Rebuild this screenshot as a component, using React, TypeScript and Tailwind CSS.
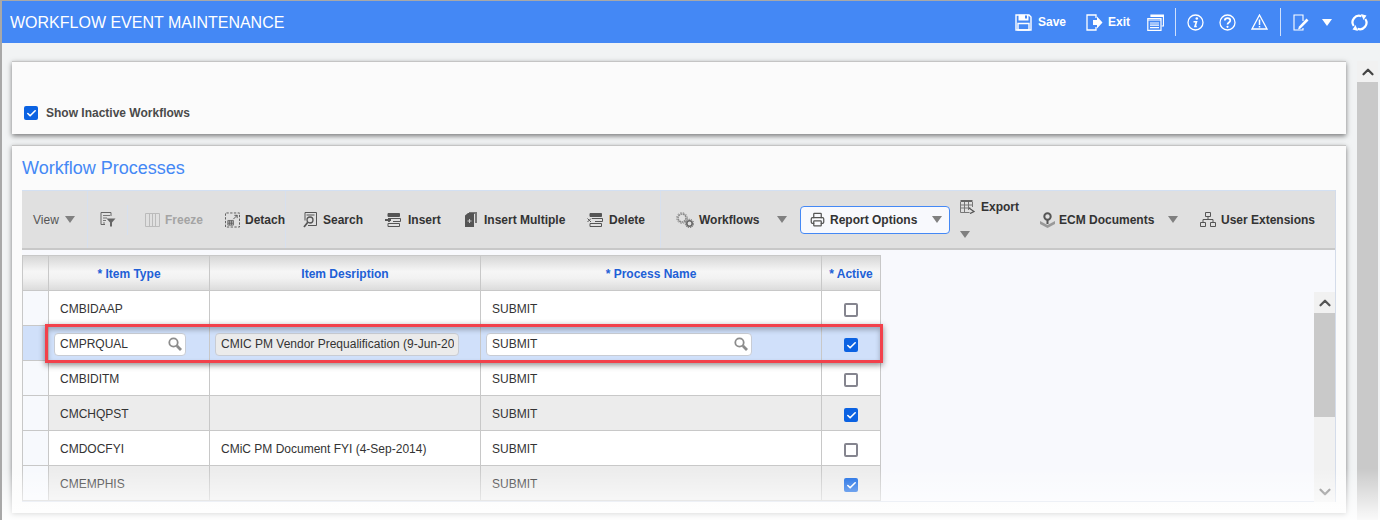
import React from 'react';
import { Check, ChevronUp, ChevronDown, Printer } from 'lucide-react';

const font = "font-['Liberation_Sans',Arial,sans-serif]";

function Caret({ className = '' }: { className?: string }) {
  return (
    <svg width="10" height="7" viewBox="0 0 10 7" className={className}>
      <path d="M0 0h10L5 7z" fill="currentColor" />
    </svg>
  );
}

function Lens() {
  return (
    <svg width="14" height="14" viewBox="0 0 14 14" fill="none" stroke="#8c8c8c">
      <circle cx="5.500" cy="5.500" r="4.200" strokeWidth="1.800" />
      <path d="M8.800 8.800L13 13" strokeWidth="2.800" />
    </svg>
  );
}

function SaveGlyph() {
  return (
    <svg width="17" height="17" viewBox="0 0 17 17" fill="none" stroke="#fff" strokeWidth="1.400">
      <path d="M1 1h13l2 2v13H1z" />
      <path d="M3.500 .8h10v5.700h-10z" fill="#fff" stroke="none" />
      <path d="M10 1.500h2v3h-2z" fill="#4488f5" stroke="none" />
      <path d="M3 9.500h11V16H3z" />
    </svg>
  );
}

function ExitGlyph() {
  return (
    <svg width="17" height="17" viewBox="0 0 17 17" fill="none">
      <path d="M10 4V1H1v15h9v-3" stroke="#fff" strokeWidth="1.300" />
      <path d="M7 6h4V2.500L16.500 8.500 11 14.500V11H7z" fill="#fff" />
    </svg>
  );
}

function PagesGlyph() {
  return (
    <svg width="17" height="17" viewBox="0 0 17 17" fill="none" stroke="#fff" strokeWidth="1.200">
      <path d="M4 3V1h12.500v11h-2" />
      <path d="M4 2h12" strokeWidth="2" />
      <path d="M.8 4.500h13.200V16.300H.8z" fill="#4488f5" />
      <path d="M.8 6h13.200M3 9h9M3 11.200h9M3 13.600h9" />
    </svg>
  );
}

function InfoGlyph() {
  return (
    <svg width="17" height="17" viewBox="0 0 17 17" fill="none">
      <circle cx="8.500" cy="8.500" r="7.500" stroke="#fff" strokeWidth="1.300" />
      <circle cx="9.800" cy="4.500" r="1.300" fill="#fff" />
      <path d="M6.500 7.800h3l-1.500 4.700h1.800" stroke="#fff" strokeWidth="1.600" />
    </svg>
  );
}

function HelpGlyph() {
  return (
    <svg width="17" height="17" viewBox="0 0 17 17" fill="none">
      <circle cx="8.500" cy="8.500" r="7.500" stroke="#fff" strokeWidth="1.300" />
      <path d="M5.800 6.500c0-3.300 5.500-3.300 5.500 0 0 2-2.800 2-2.800 4" stroke="#fff" strokeWidth="1.700" />
      <circle cx="8.500" cy="12.800" r="1.100" fill="#fff" />
    </svg>
  );
}

function WarnGlyph() {
  return (
    <svg width="17" height="16" viewBox="0 0 17 16" fill="none">
      <path d="M8.500 1L16 15H1z" stroke="#fff" strokeWidth="1.300" />
      <path d="M8.500 5.500v5.500M8.500 12v1.500" stroke="#fff" strokeWidth="1.500" />
    </svg>
  );
}

function EditGlyph() {
  return (
    <svg width="16" height="17" viewBox="0 0 16 17" fill="none">
      <path d="M10 14v2H1V1h9v6" stroke="#fff" strokeWidth="1.100" />
      <path d="M5 15.500l1-3 7.500-8 2 2-8 8z" fill="#fff" />
    </svg>
  );
}

function RefreshGlyph() {
  return (
    <svg width="17" height="17" viewBox="0 0 17 17" fill="none">
      <path d="M2.700 12A6.500 6.500 0 0 1 10.500 2.300" stroke="#fff" strokeWidth="2.200" />
      <path d="M14.300 5A6.500 6.500 0 0 1 6.500 14.700" stroke="#fff" strokeWidth="2.200" />
      <path d="M10 0l5.500 1.500-3 4.500zM7 17l-5.500-1.500 3-4.500z" fill="#fff" />
    </svg>
  );
}

function FilterGlyph() {
  return (
    <svg width="16" height="15" viewBox="0 0 16 15" fill="none">
      <path d="M1 .5h10v3.500M1 .5v12h4" stroke="#666" />
      <path d="M3 3.500h7M3 6h4M3 8.500h3M3 11h2" stroke="#777" />
      <path d="M6.500 6.500h9l-3.500 4v4h-2v-4z" fill="#666" />
    </svg>
  );
}

function FreezeGlyph() {
  return (
    <svg width="15" height="14" viewBox="0 0 15 14" fill="none" stroke="#bbb">
      <path d="M.5.500h14v13H.5zM4.500.500v13M7.500.500v13M10.500.500v13" />
    </svg>
  );
}

function DetachGlyph() {
  return (
    <svg width="16" height="16" viewBox="0 0 16 16" fill="none">
      <path d="M.5 15.500V.500h15v15z" stroke="#555" strokeDasharray="2.500 1.500" />
      <path d="M3 8.500h6v5H3zM3 10.200h6M3 11.900h6M5 8.500v5M7 8.500v5" stroke="#555" strokeWidth=".8" />
      <path d="M9 7l4-4M10 3h3v3" stroke="#555" />
    </svg>
  );
}

function FindGlyph() {
  return (
    <svg width="14" height="16" viewBox="0 0 14 16" fill="none" stroke="#555">
      <path d="M2 .5h11.500v13H5" />
      <path d="M2 .5v8M3.500 3h8" />
      <circle cx="7" cy="8" r="3" strokeWidth="1.300" />
      <path d="M4.800 10.200L1 15" strokeWidth="1.800" />
    </svg>
  );
}

function InsertGlyph() {
  return (
    <svg width="16" height="14" viewBox="0 0 16 14" fill="none">
      <path d="M3 .5h11.500v3H3z" fill="#555" stroke="#555" />
      <path d="M3 5.500h12.500v3H8M3 10.500h11.500v3H3z" stroke="#555" />
      <path d="M0 7h6M4 5v4" stroke="#555" strokeWidth="1.800" />
    </svg>
  );
}

function InsertMultipleGlyph() {
  return (
    <svg width="12" height="15" viewBox="0 0 12 15">
      <path d="M4 0h8v11H10V2H4z" fill="#777" />
      <path d="M0 3.500L3 1h6v14H0z" fill="#555" />
      <path d="M2.500 9h4M4.500 7v4" stroke="#ccc" />
    </svg>
  );
}

function DeleteGlyph() {
  return (
    <svg width="16" height="14" viewBox="0 0 16 14" fill="none">
      <path d="M3 .5h11.500v3H3z" fill="#555" stroke="#555" />
      <path d="M5 5.500h10.500v3H8M3 10.500h11.500v3H3z" stroke="#555" />
      <path d="M.5 5.500l3.500 3.500M4 5.500L.5 9" stroke="#555" />
    </svg>
  );
}

function GearsGlyph() {
  return (
    <svg width="18" height="16" viewBox="0 0 18 16" fill="none">
      <circle cx="6" cy="6" r="4" stroke="#888" strokeWidth="1.600" strokeDasharray="1.800 .6" />
      <circle cx="6" cy="6" r="5.300" stroke="#888" strokeWidth="1" strokeDasharray="1.500 1.300" />
      <circle cx="13.500" cy="11.500" r="2.700" stroke="#666" strokeWidth="1.600" />
      <circle cx="13.500" cy="11.500" r="4.200" stroke="#666" strokeWidth="1" strokeDasharray="1.300 1" />
    </svg>
  );
}

function ExportGlyph() {
  return (
    <svg width="15" height="14" viewBox="0 0 15 14" fill="none">
      <path d="M.5 0h12v2H.5z" fill="#666" />
      <path d="M.5 2v10.500h9M12.500 2v5M4.500 2v10M8.500 2v8M.5 5h12M.5 8h10" stroke="#777" />
      <path d="M9 8l5 3.500-4 2" stroke="#555" strokeWidth="1.300" />
    </svg>
  );
}

function EcmGlyph() {
  return (
    <svg width="15" height="16" viewBox="0 0 15 16" fill="none">
      <path d="M0 9l7.500 4L15 9v3l-7.500 4L0 12z" fill="#999" />
      <circle cx="7.500" cy="4.500" r="3.200" stroke="#555" strokeWidth="2" />
      <path d="M7.500 8v4" stroke="#555" strokeWidth="2" />
    </svg>
  );
}

function ExtensionsGlyph() {
  return (
    <svg width="16" height="15" viewBox="0 0 16 15" fill="none" stroke="#555">
      <path d="M5.500.5h5v4h-5zM.5 10.500h5v4h-5zM10.500 10.500h5v4h-5z" />
      <path d="M8 4.500v3M3 10.500v-3h10v3" />
    </svg>
  );
}

function Box({ checked, className = '' }: { checked?: boolean; className?: string }) {
  if (checked) {
    return (
      <span className={`flex h-[14px] w-[14px] items-center justify-center rounded-[2px] bg-[#0b62e2] ${className}`}>
        <Check size={11} strokeWidth={3.5} color="#fff" />
      </span>
    );
  }
  return <span className={`block h-[14px] w-[14px] rounded-[2px] border-2 border-[#85858f] bg-white ${className}`} />;
}

function Tool({ icon, label, width, gap = 'gap-[7px]', muted, className = '' }: { icon: React.ReactNode; label: string; width: string; gap?: string; muted?: boolean; className?: string }) {
  return (
    <div className={`flex shrink-0 items-center ${gap} ${width} ${className}`}>
      {icon}
      <span className={`whitespace-nowrap text-[12px] font-bold ${muted ? 'text-[#a4a4a4]' : 'text-[#333]'}`}>{label}</span>
    </div>
  );
}

function HeaderCell({ children, last }: { children: React.ReactNode; last?: boolean }) {
  return (
    <div className={`flex h-[36px] items-center justify-center border-t border-l border-b border-[#c8c8c8] bg-[linear-gradient(#d6d6d6,#f6f6f6_45%,#f2f2f2_65%,#dcdcdc)] pt-[1px] text-[12px] font-bold text-[#2160d6] ${last ? 'border-r' : ''}`}>
      {children}
    </div>
  );
}

const rows = [
  { type: 'CMBIDAAP', desc: '', active: false, bg: 'bg-white' },
  { type: 'CMBIDITM', desc: '', active: false, bg: 'bg-white' },
  { type: 'CMCHQPST', desc: '', active: true, bg: 'bg-[#ececec]' },
  { type: 'CMDOCFYI', desc: 'CMiC PM Document FYI (4-Sep-2014)', active: false, bg: 'bg-white' },
  { type: 'CMEMPHIS', desc: '', active: true, bg: 'bg-[#ececec]' },
];

const cols = 'grid grid-cols-[26px_161px_271px_341px_60px]';
const cell = 'flex h-[35px] items-center border-l border-b border-[#c8c8c8] pt-[2px] text-[12px] text-[#333]';

function PlainRow({ row }: { row: (typeof rows)[number] }) {
  return (
    <div className={cols}>
      <div className={`${cell} bg-[#f7f9fd]`} />
      <div className={`${cell} ${row.bg} pl-[11px]`}>{row.type}</div>
      <div className={`${cell} ${row.bg} pl-[11px]`}>{row.desc}</div>
      <div className={`${cell} ${row.bg} pl-[11px]`}>SUBMIT</div>
      <div className={`${cell} ${row.bg} justify-center border-r`}>
        <Box checked={row.active} className="mt-[2px]" />
      </div>
    </div>
  );
}

function SelectedRow() {
  const input = 'flex h-[23px] items-center rounded-[4px] border border-[#c8ccd4] pl-[5px] text-[12px] text-[#333]';
  return (
    <div className={`${cols} relative z-10`}>
      <div className={`${cell} bg-[#d0e0fa]`} />
      <div className={`${cell} bg-[#d0e0fa] pl-[5px]`}>
        <div className={`${input} w-[132px] justify-between bg-white pr-[3px]`}>
          CMPRQUAL
          <Lens />
        </div>
      </div>
      <div className={`${cell} bg-[#d0e0fa] pl-[5px]`}>
        <div className={`${input} w-[244px] overflow-hidden whitespace-nowrap bg-[#ebebeb]`}>
          <span className="w-[233px] overflow-hidden">CMIC PM Vendor Prequalification (9-Jun-2014)</span>
        </div>
      </div>
      <div className={`${cell} bg-[#d0e0fa] pl-[5px]`}>
        <div className={`${input} w-[266px] justify-between bg-white pr-[3px]`}>
          SUBMIT
          <Lens />
        </div>
      </div>
      <div className={`${cell} justify-center border-r bg-[#d0e0fa]`}>
        <Box checked className="mt-[2px]" />
      </div>
      <div className="pointer-events-none absolute -top-[2px] left-[23px] h-[39px] w-[838px] border-[3px] border-[#f2414b] shadow-[0_2px_6px_rgba(0,0,0,0.45),inset_0_3px_5px_rgba(0,0,0,0.25)]" />
    </div>
  );
}

export default function App() {
  return (
    <div className={`${font} relative h-[520px] w-[1380px] overflow-hidden border-t border-l-2 border-[#a8a8a8] bg-[#f1f3f4]`}>
      {/* top bar */}
      <div className="flex h-[42px] items-center justify-between bg-[#4488f5] pl-[8px] text-white">
        <span className="pt-[1px] text-[16px]">WORKFLOW EVENT MAINTENANCE</span>
        <div className="flex items-center pr-[12px]">
          <div className="flex w-[71px] items-center gap-[6px] text-[12px] font-bold"><SaveGlyph />Save</div>
          <div className="flex w-[61px] items-center gap-[5px] text-[12px] font-bold"><ExitGlyph />Exit</div>
          <PagesGlyph />
          <div className="mx-[11px] h-[28px] w-px bg-[#cfe0fc]" />
          <InfoGlyph />
          <div className="w-[15px]" />
          <HelpGlyph />
          <div className="w-[15px]" />
          <WarnGlyph />
          <div className="mx-[12px] h-[28px] w-px bg-[#cfe0fc]" />
          <EditGlyph />
          <Caret className="mr-[19px] ml-[13px] text-white" />
          <RefreshGlyph />
        </div>
      </div>

      <div className="flex">
        <div className="w-[1345px] pt-[18px] pl-[10px]">
          {/* filter card */}
          <div className="flex h-[73px] w-[1334px] items-end border-t border-[#c4c4c4] bg-[#fbfbfb] pb-[12px] pl-[12px] shadow-[0_2px_5px_rgba(0,0,0,0.5)]">
            <label className="flex items-center gap-[8px] text-[12px] font-bold text-[#4a4a4a]">
              <Box checked />
              Show Inactive Workflows
            </label>
          </div>

          {/* grid card */}
          <div className="mt-[11px] h-[368px] w-[1334px] border-t border-[#c4c4c4] bg-[#fbfbfb] px-[10px] shadow-[0_2px_5px_rgba(0,0,0,0.5)]">
            <h2 className="flex h-[44px] items-center text-[18px] text-[#4488f5]">Workflow Processes</h2>
            <div className="h-[312px] w-[1314px] border-r border-b border-[#d4dcea] bg-[#f8f9fd]">
              <div className="flex h-[60px] items-center border-t border-b-2 border-t-[#d3e0f2] border-b-[#c8c8c8] bg-[#e0e0e0] pl-[11px]">
                <div className="flex w-[54px] shrink-0 items-center gap-[6px] text-[12px] text-[#555]">
                  View <Caret className="text-[#808080]" />
                </div>
                <div className="mr-[12px] w-px shrink-0 self-stretch bg-[#d7e0ee]" />
                <div className="h-[30px] w-[28px] shrink-0 border-r border-[#d7e0ee] pt-[7px]"><FilterGlyph /></div>
                <Tool className="ml-[17px]" width="w-[80px]" icon={<FreezeGlyph />} label="Freeze" muted gap="gap-[5px]" />
                <Tool width="w-[60px]" icon={<DetachGlyph />} label="Detach" gap="gap-[5px]" />
                <div className="mr-[17px] w-px shrink-0 self-stretch bg-[#d7e0ee]" />
                <Tool width="w-[82px]" icon={<FindGlyph />} label="Search" gap="gap-[6px]" />
                <Tool width="w-[80px]" icon={<InsertGlyph />} label="Insert" />
                <Tool width="w-[122px]" icon={<InsertMultipleGlyph />} label="Insert Multiple" />
                <Tool width="w-[73px]" icon={<DeleteGlyph />} label="Delete" gap="gap-[6px]" />
                <div className="mr-[15px] w-px shrink-0 self-stretch bg-[#d7e0ee]" />
                <Tool width="w-[101px]" icon={<GearsGlyph />} label="Workflows" gap="gap-[5px]" />
                <div className="w-[23px] shrink-0"><Caret className="text-[#808080]" /></div>
                <div className="flex h-[28px] w-[150px] shrink-0 items-center rounded-[4px] border border-[#4488f5] bg-[#f8f9fd] pl-[9px]">
                  <Printer size={15} color="#555" />
                  <span className="ml-[5px] text-[12px] font-bold text-[#333]">Report Options</span>
                  <Caret className="ml-[15px] text-[#808080]" />
                </div>
                <div className="ml-[10px] flex h-full w-[80px] shrink-0 flex-col">
                  <div className="mt-[7px] flex items-center gap-[6px] text-[12px] font-bold text-[#333]">
                    <ExportGlyph />
                    Export
                  </div>
                  <Caret className="mt-[15px] text-[#808080]" />
                </div>
                <Tool width="w-[128px]" icon={<EcmGlyph />} label="ECM Documents" gap="gap-[4px]" />
                <div className="w-[32px] shrink-0"><Caret className="text-[#808080]" /></div>
                <Tool width="w-[120px]" icon={<ExtensionsGlyph />} label="User Extensions" gap="gap-[5px]" />
              </div>

              <div className="flex justify-between pt-[5px]">
                <div className="w-[859px]">
                  <div className={cols}>
                    <HeaderCell>{''}</HeaderCell>
                    <HeaderCell>* Item Type</HeaderCell>
                    <HeaderCell>Item Desription</HeaderCell>
                    <HeaderCell>* Process Name</HeaderCell>
                    <HeaderCell last>* Active</HeaderCell>
                  </div>
                  <PlainRow row={rows[0]} />
                  <SelectedRow />
                  {rows.slice(1).map((row) => (
                    <PlainRow key={row.type} row={row} />
                  ))}
                </div>
                {/* grid scrollbar */}
                <div className="mt-[37px] flex h-[210px] w-[21px] flex-col bg-[#f1f1f1]">
                  <div className="flex h-[21px] items-center justify-center"><ChevronUp size={18} strokeWidth={3} color="#555" /></div>
                  <div className="h-[104px] bg-[#c9c9c9]" />
                  <div className="mt-auto flex h-[21px] items-center justify-center"><ChevronDown size={18} strokeWidth={3} color="#777" /></div>
                </div>
              </div>
            </div>
          </div>
        </div>

        {/* page scrollbar */}
        <div className="mt-[18px] ml-[10px] flex h-[460px] w-[21px] flex-col bg-[#c9c9c9]">
          <div className="flex h-[21px] items-center justify-center bg-[#f1f1f1]"><ChevronUp size={18} strokeWidth={3} color="#444" /></div>
        </div>
      </div>

      {/* bottom fade */}
      <div className="pointer-events-none absolute inset-x-0 bottom-0 h-[52px] bg-[linear-gradient(rgba(255,255,255,0),rgba(255,255,255,0.9))]" />
    </div>
  );
}
